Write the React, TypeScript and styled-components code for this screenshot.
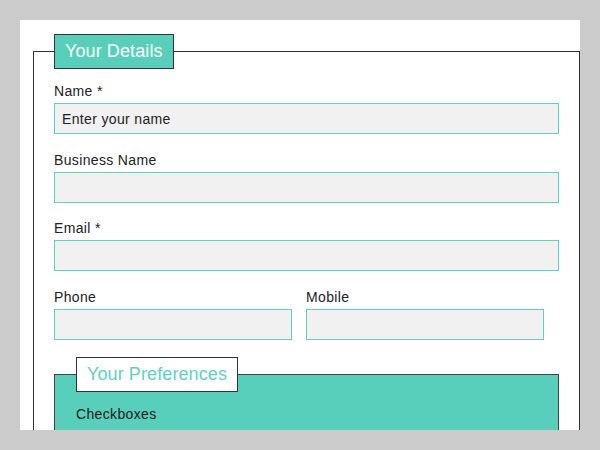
import styled, { createGlobalStyle } from "styled-components";

const GlobalStyle = createGlobalStyle`
  html, body {
    margin: 0;
    padding: 0;
  }
  body {
    background: #cccccc;
    font-family: "Liberation Sans", Arial, sans-serif;
    color: #222222;
  }
`;

const Page = styled.div`
  padding: 20px;
  height: 450px;
  box-sizing: border-box;
`;

const Panel = styled.div`
  background: #ffffff;
  height: 410px;
  overflow: hidden;
  padding: 14px 0 0 13px;
  box-sizing: border-box;
`;

const Details = styled.fieldset`
  margin: 0;
  padding: 14px 20px 20px;
  border: 1px solid #333333;
  min-width: 0;
`;

const Legend = styled.legend<{ $inverse?: boolean }>`
  padding: 6px 10px;
  margin: 0;
  font-size: 18px;
  line-height: 21px;
  letter-spacing: 0.1px;
  border: 1px solid #333333;
  background: ${(p) => (p.$inverse ? "#ffffff" : "#57cfba")};
  color: ${(p) => (p.$inverse ? "#5dd3be" : "#ffffff")};
`;

const Field = styled.div`
  margin-bottom: 17.5px;
`;

const Label = styled.label`
  display: block;
  font-size: 14px;
  line-height: 16.1px;
  letter-spacing: 0.35px;
  margin-bottom: 4px;
`;

const Input = styled.input<{ $half?: boolean }>`
  display: block;
  box-sizing: border-box;
  width: ${(p) => (p.$half ? "238px" : "100%")};
  height: 31px;
  margin: 0;
  padding: 0 7px;
  border: 1px solid #5dd3be;
  background: #f1f1f1;
  font-family: inherit;
  font-size: 14px;
  letter-spacing: 0.35px;
  color: #222222;
  outline: none;
  &::placeholder {
    color: #222222;
    opacity: 1;
  }
`;

const Row = styled.div`
  display: grid;
  grid-template-columns: 252px 1fr;
`;

const Preferences = styled.fieldset`
  margin: 0;
  padding: 14px 21px 20px;
  border: 1px solid #444444;
  background: #57cfba;
  min-width: 0;
`;

const GroupTitle = styled.div`
  font-size: 14px;
  line-height: 16.1px;
  letter-spacing: 0.35px;
  color: #1a1a1a;
`;

export default function App() {
  return (
    <>
      <GlobalStyle />
      <Page>
        <Panel>
          <Details>
            <Legend>Your Details</Legend>
            <Field>
              <Label>Name *</Label>
              <Input placeholder="Enter your name" />
            </Field>
            <Field>
              <Label>Business Name</Label>
              <Input />
            </Field>
            <Field>
              <Label>Email *</Label>
              <Input />
            </Field>
            <Row>
              <Field>
                <Label>Phone</Label>
                <Input $half />
              </Field>
              <Field>
                <Label>Mobile</Label>
                <Input $half />
              </Field>
            </Row>
            <Preferences>
              <Legend $inverse>Your Preferences</Legend>
              <GroupTitle>Checkboxes</GroupTitle>
            </Preferences>
          </Details>
        </Panel>
      </Page>
    </>
  );
}
